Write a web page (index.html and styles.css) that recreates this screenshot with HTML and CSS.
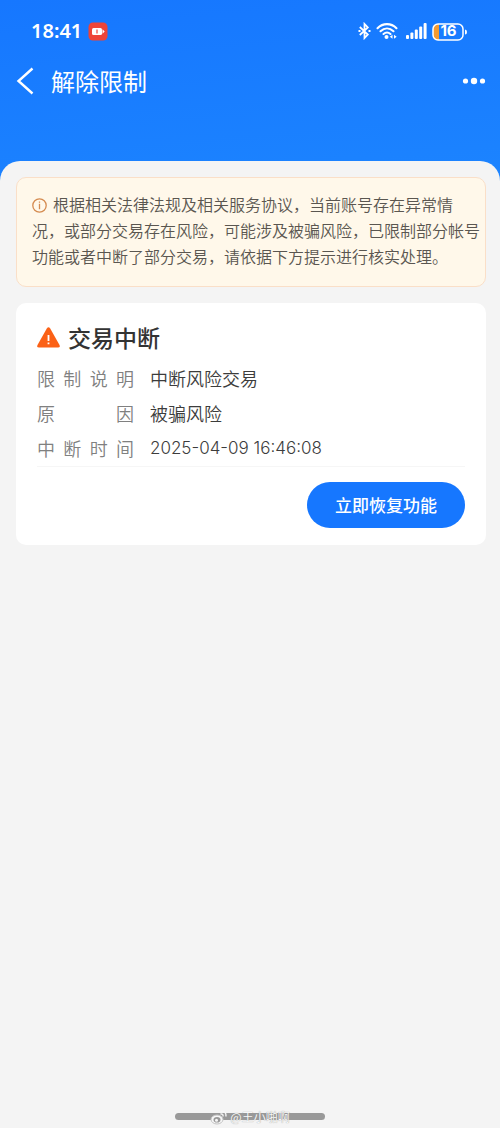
FILE: index.html
```html
<!DOCTYPE html>
<html lang="zh-CN">
<head>
<meta charset="utf-8">
<meta name="viewport" content="width=device-width, initial-scale=1">
<title>解除限制</title>
<link rel="stylesheet" href="styles.css">
</head>
<body class="page">
<header class="top">
  <div class="status">
    <div class="status-left">
      <span class="time">18:41</span>
      <svg class="charge" width="20" height="19" viewBox="0 0 20 19" aria-hidden="true">
        <rect x="0.5" y="0.5" width="19" height="18" rx="4.5" fill="#ee4438"/>
        <rect x="4" y="6" width="10" height="7" rx="1.5" fill="#fff"/>
        <path d="M14.5 7.200l2.200 2.300-2.200 2.300z" fill="#fff"/>
        <path d="M9 7.500v4" stroke="#ee4438" stroke-width="1.200"/>
      </svg>
    </div>
    <div class="status-right">
      <svg width="13" height="18" viewBox="0 0 13 18" fill="none" stroke="#fff" stroke-width="1.800" aria-hidden="true">
        <path d="M1.800 5l8 7.500L6.500 16V2l3.300 3.500-8 7.500"/>
        <path d="M.5 9h2M10.500 9h2" stroke-width="2"/>
      </svg>
      <svg width="22" height="18" viewBox="0 0 22 18" fill="none" stroke="#fff" stroke-width="2.100" stroke-linecap="round" aria-hidden="true">
        <path d="M1.500 6.200C7 .8 15 .8 20.500 6.200"/>
        <path d="M4.500 9.200c4-3.700 9-3.700 13 0"/>
        <path d="M7.500 12c2.300-2 4.700-2 7 0"/>
        <circle cx="10.500" cy="15" r="2" fill="#fff" stroke="none"/>
        <path d="M16.500 12.800v4L13.800 14.800zM18 12.800v4l2.700-2z" fill="#fff" stroke="none"/>
      </svg>
      <svg class="signal" width="21" height="18" viewBox="0 0 21 18" fill="#fff" aria-hidden="true">
        <rect x="0" y="13" width="3" height="4" rx="1"/>
        <rect x="4.400" y="10.500" width="3" height="6.500" rx="1"/>
        <rect x="8.800" y="7.500" width="3" height="9.500" rx="1"/>
        <rect x="13.200" y="4.500" width="3" height="12.500" rx="1"/>
        <rect x="17.600" y="1" width="3" height="16" rx="1"/>
      </svg>
      <div class="battery">
        <svg width="36" height="18" viewBox="0 0 36 18" aria-hidden="true">
          <path d="M7 1H5a4 4 0 0 0-4 4v8a4 4 0 0 0 4 4h2z" fill="#f39a32"/>
          <rect x="1" y="1" width="30" height="16" rx="5" fill="none" stroke="#fff" stroke-width="1.500"/>
          <path d="M33 6.500q2 0 2 2.500t-2 2.500z" fill="#fff"/>
        </svg>
        <span class="battery-level">16</span>
      </div>
    </div>
  </div>
  <nav class="nav">
    <button class="icon-button" type="button" aria-label="返回">
      <svg width="18" height="28" viewBox="0 0 18 28" fill="none" stroke="#fff" stroke-width="2.400" aria-hidden="true"><path d="M16.500 1.500L2.500 14l14 12.500"/></svg>
    </button>
    <h1 class="nav-title">解除限制</h1>
    <button class="icon-button more" type="button" aria-label="更多">
      <svg width="24" height="8" viewBox="0 0 24 8" fill="#fff" aria-hidden="true"><circle cx="3.500" cy="4" r="2.600"/><circle cx="12" cy="4" r="3.200"/><circle cx="20.500" cy="4" r="2.600"/></svg>
    </button>
  </nav>
</header>
<main class="sheet">
  <p class="notice"><svg class="info" width="15" height="15" viewBox="0 0 15 15" fill="none" stroke="#d58b50" stroke-width="1.300" aria-hidden="true"><circle cx="7.500" cy="7.500" r="6.700"/><path d="M7.500 5.700v5.500M7.500 3.600v1.200"/></svg>根据相关法律法规及相关服务协议，当前账号存在异常情<br>况，或部分交易存在风险，可能涉及被骗风险，已限制部分帐号功能或者中断了部分交易，请依据下方提示进行核实处理。</p>
  <section class="card">
    <h2 class="card-title">
      <svg width="23" height="21" viewBox="0 0 23 21" aria-hidden="true">
        <path d="M9.800 1.400q1.700-2.300 3.400 0l9.300 16.700q.9 2.400-1.500 2.400H2q-2.400 0-1.500-2.400z" fill="#fb6116"/>
        <path d="M11.500 8v6M11.500 15.500v1.800" stroke="#fff" stroke-width="1.800"/>
      </svg>
      交易中断
    </h2>
    <dl class="details">
      <div class="row"><dt class="label">限制说明</dt><dd class="value">中断风险交易</dd></div>
      <div class="row"><dt class="label">原因</dt><dd class="value">被骗风险</dd></div>
      <div class="row"><dt class="label">中断时间</dt><dd class="value date">2025-04-09 16:46:08</dd></div>
    </dl>
    <div class="actions"><button class="primary" type="button">立即恢复功能</button></div>
  </section>
</main>
<footer class="home">
  <div class="home-bar"></div>
  <div class="watermark">
    <svg width="17" height="15" viewBox="0 0 17 15" fill="none" aria-hidden="true">
      <ellipse cx="7" cy="9.500" rx="6" ry="4.500" fill="#f7f7f7" stroke="#c4c4c4"/>
      <ellipse cx="7" cy="9.800" rx="3.500" ry="2.800" fill="#999"/>
      <circle cx="6.500" cy="10.300" r="1.500" fill="#f7f7f7"/>
      <path d="M10.500 4q3-.5 2.500 2.500M10.500 1.500q6-1 5.500 5" stroke="#f7f7f7" stroke-width="1.400"/>
    </svg>
    <span>@王小啪啊</span>
  </div>
</footer>
</body>
</html>
```
FILE: styles.css
```css
* { box-sizing: border-box; }

.page {
  margin: 0;
  min-height: 100vh;
  display: flex;
  flex-direction: column;
  background: #f4f4f4;
  color: #333;
  font-family: "Noto Sans CJK SC", sans-serif;
}

.top {
  padding: 18px 14px 82px 16px;
  margin-bottom: -20px;
  background: linear-gradient(175deg, #1677ff, #1c84ff);
  color: #fff;
}

.status {
  display: flex;
  justify-content: space-between;
  align-items: center;
  height: 26px;
  padding: 0 18px 0 15px;
}

.status-left,
.status-right { display: flex; align-items: center; }
.status-left { gap: 6px; }
.status-right { gap: 5px; }
.signal { margin-left: 3px; }

.time {
  font: 600 20px/26px "Noto Sans", sans-serif;
}

.battery { position: relative; height: 18px; }

.battery-level {
  position: absolute;
  inset: 0 3px 0 0;
  text-align: center;
  font: 700 15px/18px Inter, sans-serif;
}

.nav {
  display: flex;
  align-items: center;
  height: 36px;
  margin-top: 19px;
}

.icon-button {
  display: flex;
  padding: 0;
  border: 0;
  background: none;
  cursor: pointer;
}

.more { margin-left: auto; }

.nav-title {
  margin: 0 0 0 17px;
  font-size: 24px;
  font-weight: 400;
  line-height: 36px;
}

.sheet {
  flex: 1;
  padding: 16px 14px 16px 16px;
  border-radius: 20px 20px 0 0;
  background: #f4f4f4;
}

.notice {
  margin: 0 0 16px;
  padding: 13px 4px 17px 15px;
  border: 1px solid #fadfc8;
  border-radius: 10px;
  background: #fff8ea;
  color: #5a5650;
  font-size: 16px;
  font-weight: 350;
  line-height: 26px;
}

.info {
  margin-right: 6px;
  vertical-align: -2px;
}

.card {
  padding: 18px 21px 17px;
  border-radius: 10px;
  background: #fff;
}

.card-title {
  display: flex;
  align-items: center;
  gap: 8px;
  margin: 0 0 8px;
  font-size: 23px;
  font-weight: 500;
  line-height: 32px;
}

.details {
  margin: 0;
  border-bottom: 1px solid #f6f6f6;
}

.row { display: flex; gap: 16px; }

.label,
.value {
  margin: 0;
  font-size: 18px;
  font-weight: 350;
  line-height: 35px;
}

.label {
  width: 97px;
  color: #808080;
  text-align: justify;
  text-align-last: justify;
}

.value { color: #3c3c3c; }

.date {
  font-family: Inter, sans-serif;
  font-size: 17px;
}

.actions {
  display: flex;
  justify-content: flex-end;
  padding-top: 15px;
}

.primary {
  height: 46px;
  padding: 0 28px;
  border: 0;
  border-radius: 23px;
  background: #1677ff;
  color: #fff;
  font: 500 17px/46px "Noto Sans CJK SC", sans-serif;
  cursor: pointer;
}

.home {
  position: relative;
  display: flex;
  justify-content: center;
  padding-bottom: 8px;
}

.home-bar {
  width: 30%;
  height: 7px;
  border-radius: 4px;
  background: #999;
}

.watermark {
  position: absolute;
  bottom: 2px;
  display: flex;
  align-items: center;
  gap: 3px;
  color: #f7f7f7;
  font-size: 12px;
  line-height: 18px;
  text-shadow: 0 0 1px #888;
}
```
